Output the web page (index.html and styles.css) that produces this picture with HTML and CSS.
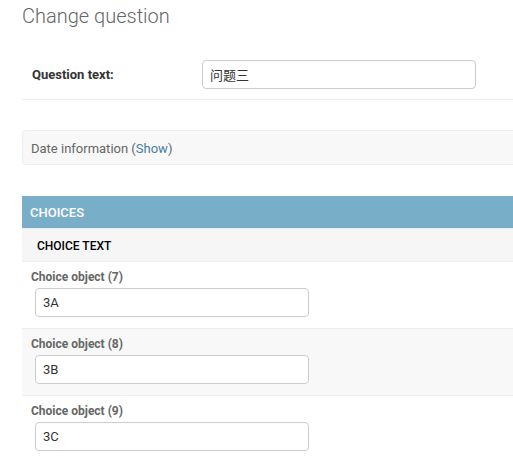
FILE: index.html
```html
<!DOCTYPE html>
<html>
<head>
<meta charset="utf-8">
<link rel="stylesheet" href="styles.css">
</head>
<body>
<div class="content">
  <h1 class="title">Change question</h1>
  <div class="form-row">
    <label class="field-label">Question text:</label>
    <input class="text-input wide" type="text" value="问题三">
  </div>
  <div class="collapsed">Date information (<a href="#" class="show-link">Show</a>)</div>
  <div class="inline-group">
    <h2 class="inline-title">Choices</h2>
    <div class="inline-head">Choice text</div>
    <div class="inline-row">
      <div class="original">Choice object (7)</div>
      <input class="text-input narrow" type="text" value="3A">
    </div>
    <div class="inline-row alt">
      <div class="original">Choice object (8)</div>
      <input class="text-input narrow" type="text" value="3B">
    </div>
    <div class="inline-row">
      <div class="original">Choice object (9)</div>
      <input class="text-input narrow" type="text" value="3C">
    </div>
  </div>
</div>
</body>
</html>
```
FILE: styles.css
```css
html, body {
  margin: 0;
  padding: 0;
  overflow: hidden;
  background: #fff;
}
body {
  font-family: Roboto, "Noto Sans CJK SC", sans-serif;
  font-size: 14px;
  color: #333;
}
.content {
  width: 620px;
  padding: 4px 0 0 22px;
}
.title {
  margin: 0;
  font-size: 20px;
  line-height: 24px;
  font-weight: 300;
  color: #666;
}
.form-row {
  margin-top: 22px;
  display: flex;
  align-items: center;
  padding: 10px;
  border-bottom: 1px solid #eee;
}
.field-label {
  width: 160px;
  padding-right: 10px;
  font-size: 13px;
  font-weight: 700;
  color: #333;
}
.text-input {
  box-sizing: border-box;
  height: 29px;
  border: 1px solid #ccc;
  border-radius: 4px;
  padding: 5px 7px;
  font-family: Roboto, "Noto Sans CJK SC", sans-serif;
  font-size: 13px;
  color: #333;
  background: #fff;
  margin: 0;
}
.wide { width: 274px; }
.narrow { width: 274px; }
.collapsed {
  margin-top: 30px;
  box-sizing: border-box;
  height: 35px;
  display: flex;
  align-items: center;
  padding: 1px 8px 0;
  background: #f8f8f8;
  border: 1px solid #eee;
  border-radius: 4px;
  font-size: 13px;
  color: #666;
}
.show-link {
  color: #447e9b;
  text-decoration: none;
}
.inline-group {
  margin-top: 31px;
}
.inline-title {
  margin: 0;
  height: 32px;
  display: flex;
  align-items: center;
  padding: 0 8px;
  background: #79aec8;
  color: #fff;
  font-size: 13px;
  font-weight: 500;
  text-transform: uppercase;
}
.inline-head {
  border-top: 1px solid #eee;
  height: 33px;
  box-sizing: border-box;
  display: flex;
  align-items: center;
  padding: 1px 15px 0;
  background: #f6f6f6;
  font-size: 12px;
  font-weight: 500;
  color: #000;
  text-transform: uppercase;
}
.inline-row {
  border-top: 1px solid #eee;
  height: 67px;
  box-sizing: border-box;
  padding: 7px 0 0 9px;
}
.inline-row.alt {
  background: #f8f8f8;
}
.original {
  font-size: 12px;
  font-weight: 700;
  color: #666;
  line-height: 16px;
  margin-bottom: 3px;
}
.inline-row .text-input {
  margin-left: 4px;
}
```
